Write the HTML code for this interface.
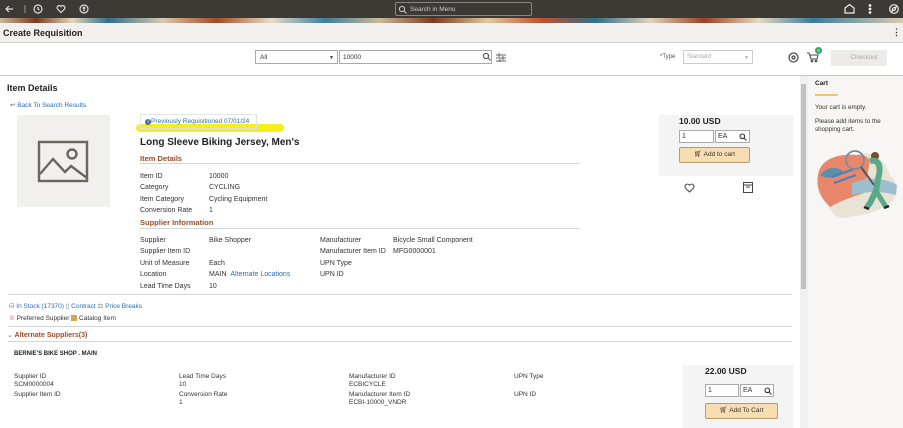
<!DOCTYPE html>
<html><head><meta charset="utf-8"><style>
*{margin:0;padding:0;box-sizing:border-box}
body{width:903px;height:428px;overflow:hidden;background:#fff;font-family:"Liberation Sans",sans-serif;font-size:7px;color:#333;position:relative}
.a{position:absolute;white-space:nowrap}
.lnk{color:#2a6cb0}
.br{color:#9b4d2a;font-weight:bold;font-size:7.5px}
.hr{position:absolute;height:1px;background:#d5d5d5}
.inp{position:absolute;border:1px solid #aaa;background:#fff}
</style></head><body>
<div class="a" style="left:0;top:0;width:903px;height:18px;background:#3d3a36"></div>
<div class="a" style="left:0;top:18px;width:903px;height:5px;background:linear-gradient(90deg,#c9b99a 0,#7a3c1e 4%,#e3d6bc 8%,#2e6f8a 12%,#d7c9ae 18%,#a24a20 24%,#e8dcc6 30%,#3a7f9e 36%,#cab89a 42%,#7a3c1e 48%,#e0c8a0 54%,#c0502a 60%,#2e6f8a 66%,#ded2bb 72%,#9a4020 78%,#e4d8c2 84%,#3b7c9a 90%,#d8ccb4 100%)"></div>
<svg class="a" style="left:4px;top:3px" width="120" height="12" viewBox="0 0 120 12" fill="none" stroke="#ddd" stroke-width="1.2">
<path d="M9 6H2M5 3L2 6l3 3"/><path d="M21 2v8" stroke="#888"/>
<circle cx="34" cy="6" r="4"/><path d="M34 4v2l1.5 1"/>
<path d="M57 9.5l-3.5-3.5a2 2 0 0 1 3.5-2.5a2 2 0 0 1 3.5 2.5z"/>
<circle cx="80" cy="6" r="4"/><path d="M80 3.5v5M78.5 5h3"/>
</svg>
<div class="a" style="left:395px;top:2px;width:137px;height:14px;border:1px solid #8a8782;border-radius:2px;background:#3d3a36;color:#ccc;font-size:6.5px;padding:3px 0 0 14px">Search in Menu</div>
<svg class="a" style="left:398px;top:5px" width="9" height="9" fill="none" stroke="#ccc"><circle cx="4" cy="4" r="2.6"/><path d="M6 6l2.5 2.5"/></svg>
<svg class="a" style="left:843px;top:3px" width="58" height="12" fill="none" stroke="#eee" stroke-width="1.2"><path d="M2 10V5l4.5-3.5L11 5v5z"/><circle cx="27" cy="2.5" r=".8" fill="#eee"/><circle cx="27" cy="6" r=".8" fill="#eee"/><circle cx="27" cy="9.5" r=".8" fill="#eee"/><circle cx="51" cy="6" r="4.3"/><path d="M49 8l1-3 3-1-1 3z"/></svg>
<div class="a" style="left:0;top:23px;width:903px;height:20px;background:#f1f0ee;border-bottom:1px solid #cfcfcf"></div>
<div class="a" style="left:3px;top:28px;font-size:9px;font-weight:bold;color:#222">Create Requisition</div>
<div class="a" style="left:892px;top:27px;font-size:9px;font-weight:bold">⋮</div>
<div class="inp" style="left:255px;top:50px;width:83px;height:14px;padding:3px 4px;font-size:6.5px">All<span style="position:absolute;right:3px;font-size:5px;top:4px">▼</span></div>
<div class="inp" style="left:339px;top:50px;width:153px;height:14px;padding:3px 3px;font-size:6.5px">10000</div>
<svg class="a" style="left:482px;top:52px" width="9" height="9" fill="none" stroke="#444"><circle cx="4" cy="4" r="2.6"/><path d="M6 6l2.5 2.5"/></svg>
<svg class="a" style="left:496px;top:53px" width="10" height="9" stroke="#666"><path d="M0 2h10M0 5h10M0 8h10"/><path d="M3 0v4M7 3v4M4 6v3"/></svg>
<div class="a" style="left:660px;top:54px;font-size:6px;color:#555">*Type</div>
<div class="inp" style="left:683px;top:50px;width:70px;height:14px;border-color:#ccc;color:#aaa;font-size:6px;padding:3px 3px">Standard<span style="position:absolute;right:3px;font-size:5px;top:4px">▼</span></div>
<svg class="a" style="left:788px;top:52px" width="11" height="11" fill="none" stroke="#444" stroke-width="1.2"><circle cx="5.5" cy="5.5" r="4.5"/><circle cx="5.5" cy="5.5" r="1.5"/></svg>
<svg class="a" style="left:806px;top:51px" width="13" height="12" fill="none" stroke="#444"><path d="M1 2h2l2 6h6l1-4H4"/><circle cx="6" cy="10" r=".8"/><circle cx="10" cy="10" r=".8"/></svg>
<div class="a" style="left:815px;top:47px;width:7px;height:7px;border-radius:50%;background:#3aa06a;color:#fff;font-size:4.5px;text-align:center;line-height:7px">0</div>
<div class="a" style="left:831px;top:50px;width:56px;height:16px;background:#ecebe9;color:#aaa;font-size:6.5px;text-align:center;line-height:16px;padding-left:10px">Checkout</div>
<div class="hr" style="left:0;top:75px;width:903px;background:#c8c8c8"></div>
<div class="a" style="left:7px;top:83px;font-size:9px;font-weight:bold;color:#222">Item Details</div>
<div class="a lnk" style="left:10px;top:101px;font-size:6.5px"><span style="color:#555">↩</span> Back To Search Results</div>
<div class="a" style="left:17px;top:115px;width:93px;height:92px;background:#f1f0ee"></div>
<svg class="a" style="left:37px;top:140px" width="52" height="43" fill="none" stroke="#6c6660" stroke-width="2.4"><rect x="2" y="2" width="48" height="39"/><path d="M3 34l13-15 12 13 6-6 16 12"/><circle cx="35" cy="14" r="4.5"/></svg>
<div class="a" style="left:136px;top:124px;width:148px;height:8px;background:#f3f01a;border-radius:4px"></div>
<div class="a" style="left:140px;top:114px;width:117px;height:15px;border:1px solid #e4e4e4;padding:3px 0 0 4px;font-size:6.5px;line-height:8px"><span style="display:inline-block;width:6px;height:6px;border-radius:50%;background:#4a68a8;color:#fff;font-size:5px;text-align:center;line-height:6px;vertical-align:middle">i</span><span class="lnk" style="vertical-align:middle">Previously Requisitioned 07/01/24</span></div>
<div class="a" style="left:140px;top:137px;font-size:10px;font-weight:bold;color:#222">Long Sleeve Biking Jersey, Men's</div>
<div class="a br" style="left:140px;top:154px">Item Details</div>
<div class="hr" style="left:140px;top:163px;width:440px"></div>
<div class="a" style="left:140px;top:171px;line-height:11.3px">Item ID<br>Category<br>Item Category<br>Conversion Rate</div>
<div class="a" style="left:209px;top:171px;line-height:11.3px">10000<br>CYCLING<br>Cycling Equipment<br>1</div>
<div class="a br" style="left:140px;top:218px">Supplier Information</div>
<div class="hr" style="left:140px;top:228px;width:440px"></div>
<div class="a" style="left:140px;top:235px;line-height:11.4px">Supplier<br>Supplier Item ID<br>Unit of Measure<br>Location<br>Lead Time Days</div>
<div class="a" style="left:209px;top:235px;line-height:11.4px">Bike Shopper<br>&nbsp;<br>Each<br>MAIN &nbsp;<span class="lnk">Alternate Locations</span><br>10</div>
<div class="a" style="left:320px;top:235px;line-height:11.4px">Manufacturer<br>Manufacturer Item ID<br>UPN Type<br>UPN ID</div>
<div class="a" style="left:393px;top:235px;line-height:11.4px">Bicycle Small Component<br>MFG0000001</div>
<div class="a" style="left:659px;top:115px;width:134px;height:61px;background:#f4f4f4"></div>
<div class="a" style="left:679px;top:116px;font-size:8.5px;font-weight:bold;color:#222">10.00 USD</div>
<div class="inp" style="left:679px;top:130px;width:35px;height:13px;padding:2px 2px">1</div>
<div class="inp" style="left:715px;top:130px;width:35px;height:13px;padding:2px 2px">EA</div>
<svg class="a" style="left:739px;top:133px" width="8" height="8" fill="none" stroke="#333" stroke-width="1.1"><circle cx="3.3" cy="3.3" r="2.3"/><path d="M5 5l2.5 2.5"/></svg>
<div class="a" style="left:679px;top:147px;width:71px;height:16px;background:#f8dcb2;border:1px solid #b89a70;border-radius:2px;text-align:center;line-height:14px;font-size:6.5px">🛒︎ Add to cart</div>
<svg class="a" style="left:684px;top:183px" width="11" height="10" fill="none" stroke="#444"><path d="M5.5 9L1.3 4.8a2.2 2.2 0 0 1 4.2-2.5a2.2 2.2 0 0 1 4.2 2.5z"/></svg>
<svg class="a" style="left:743px;top:182px" width="10" height="11" fill="none" stroke="#444"><rect x=".5" y=".5" width="9" height="10"/><path d="M.5 3h9M3 5h4"/></svg>
<div class="hr" style="left:8px;top:294px;width:784px"></div>
<div class="a lnk" style="left:9px;top:302px;font-size:6.5px"><span style="color:#777">⛁</span> In Stock (17370) <span style="color:#777">▯</span> Contract <span style="color:#777">⚖</span> Price Breaks</div>
<div class="a" style="left:9px;top:314px;font-size:6.5px"><span style="color:#b3455b">♕</span> Preferred Supplier <span style="display:inline-block;width:6px;height:6px;background:#d6a64a;vertical-align:-1px"></span> Catalog Item</div>
<div class="hr" style="left:8px;top:326px;width:784px"></div>
<div class="a br" style="left:7px;top:331px;font-size:7px"><span style="color:#777;font-weight:normal">⌄</span> Alternate Suppliers(3)</div>
<div class="hr" style="left:8px;top:341px;width:784px"></div>
<div class="a" style="left:14px;top:351px;font-weight:bold;font-size:6px;color:#222">BERNIE'S BIKE SHOP . MAIN</div>
<div class="a" style="left:14px;top:373px;line-height:7.5px;font-size:6.5px">Supplier ID<br>SCM0000004</div>
<div class="a" style="left:14px;top:391px;font-size:6.5px">Supplier Item ID</div>
<div class="a" style="left:179px;top:373px;line-height:7.5px;font-size:6.5px">Lead Time Days<br>10</div>
<div class="a" style="left:179px;top:391px;line-height:7.5px;font-size:6.5px">Conversion Rate<br>1</div>
<div class="a" style="left:349px;top:373px;line-height:7.5px;font-size:6.5px">Manufacturer ID<br>ECBICYCLE</div>
<div class="a" style="left:349px;top:391px;line-height:7.5px;font-size:6.5px">Manufacturer Item ID<br>ECBI-10000_VNDR</div>
<div class="a" style="left:514px;top:373px;font-size:6.5px">UPN Type</div>
<div class="a" style="left:514px;top:391px;font-size:6.5px">UPN ID</div>
<div class="a" style="left:683px;top:365px;width:110px;height:63px;background:#f4f4f4"></div>
<div class="a" style="left:705px;top:366px;font-size:8.5px;font-weight:bold;color:#222">22.00 USD</div>
<div class="inp" style="left:705px;top:384px;width:34px;height:13px;padding:2px 2px">1</div>
<div class="inp" style="left:740px;top:384px;width:34px;height:13px;padding:2px 2px">EA</div>
<svg class="a" style="left:764px;top:387px" width="8" height="8" fill="none" stroke="#333" stroke-width="1.1"><circle cx="3.3" cy="3.3" r="2.3"/><path d="M5 5l2.5 2.5"/></svg>
<div class="a" style="left:705px;top:403px;width:73px;height:16px;background:#f8dcb2;border:1px solid #b89a70;border-radius:2px;text-align:center;line-height:14px;font-size:6.5px">🛒︎ Add To Cart</div>
<div class="a" style="left:800px;top:76px;width:8px;height:352px;background:#f0f0f0"></div>
<div class="a" style="left:801px;top:84px;width:5px;height:205px;background:#c1c1c1"></div>
<div class="a" style="left:808px;top:76px;width:95px;height:352px;background:#f7f6f4"></div>
<div class="a" style="left:815px;top:80px;font-weight:bold;font-size:6.5px;color:#222">Cart</div>
<div class="a" style="left:815px;top:94px;width:23px;height:2px;background:#f2c65a"></div>
<div class="a" style="left:815px;top:104px;font-size:6.3px">Your cart is empty.</div>
<div class="a" style="left:815px;top:118px;font-size:6.3px;line-height:7.5px">Please add items to the<br>shopping cart.</div>
<svg class="a" style="left:812px;top:145px" width="88" height="75" viewBox="0 0 88 75">
<path d="M6 30C8 15 25 8 45 10C60 4 72 14 78 30C88 38 86 55 75 60C65 68 50 70 38 72C28 75 20 70 16 60C6 52 4 42 6 30z" fill="#e9e3d6"/>
<path d="M6 30C8 15 25 8 45 10C52 9 56 12 58 16L52 48C40 52 28 56 18 62C8 52 4 42 6 30z" fill="#e8876a"/>
<path d="M40 38C55 32 72 32 85 40L84 50C70 46 55 46 40 50z" fill="#9bbfcf"/>
<path d="M8 30C16 20 28 22 32 28C22 34 14 34 8 30z" fill="#5a8fb0"/>
<path d="M20 32l22-8M22 38l22-8" stroke="#4b7fc0" stroke-width="2"/>
<circle cx="43" cy="15" r="9" fill="none" stroke="#7b8ca0" stroke-width="1.8"/>
<path d="M49 22L62 40" stroke="#555" stroke-width="2"/>
<circle cx="63" cy="11" r="4" fill="#7a4a30"/>
<path d="M58 16C66 14 70 20 66 34L64 46L58 58L55 62" stroke="#5aa88a" stroke-width="6" fill="none"/>
<path d="M64 46L74 62" stroke="#5aa88a" stroke-width="5" fill="none"/>
<path d="M52 62l5 2M72 63l5-2" stroke="#222" stroke-width="2.5"/>
</svg>
</body></html>
